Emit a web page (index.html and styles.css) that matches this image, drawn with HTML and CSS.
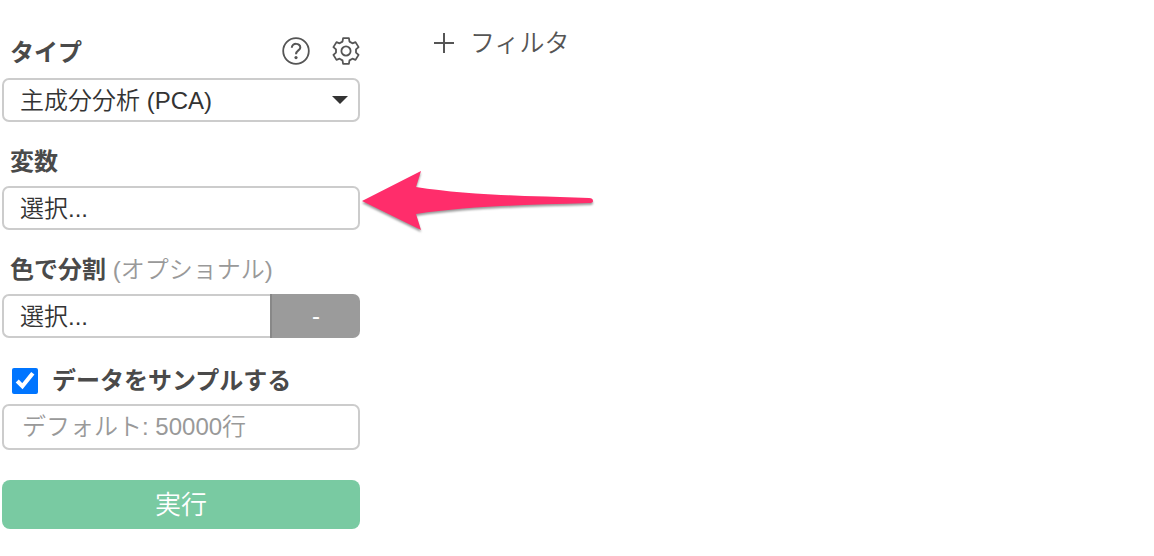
FILE: index.html
```html
<!DOCTYPE html>
<html lang="ja">
<head>
<meta charset="utf-8">
<meta name="viewport" content="width=device-width, initial-scale=1">
<title>主成分分析</title>
<link rel="stylesheet" href="styles.css">
</head>
<body>
<main class="layout">
  <form class="panel">
    <div class="field">
      <div class="field-head">
        <label class="label" for="type">タイプ</label>
        <div class="tools">
          <button type="button" class="icon-button" aria-label="ヘルプ">
            <svg width="28" height="28" viewBox="-14 -14 28 28" fill="none" stroke="#555" stroke-width="1.8">
              <circle r="12.8"/>
              <path d="M-4.2-3.2C-4.2-8.6 4.6-8.2 4.3-3.4C4.1-.6 0-.5 0 3.2" stroke-width="2"/>
              <circle cy="6.6" r="1.6" fill="#555" stroke="none"/>
            </svg>
          </button>
          <button type="button" class="icon-button" aria-label="設定">
            <svg width="28" height="28" viewBox="-14 -14 28 28" fill="none" stroke="#555" stroke-width="1.8" stroke-linejoin="round">
              <path d="M-2.9-12.8H2.9L3.5-9.4L6.4-7.7L9.5-8.9L12.6-3.9L10-1.6V1.6L12.6 3.9L9.5 8.9L6.4 7.7L3.5 9.4L2.9 12.8H-2.9L-3.5 9.4L-6.4 7.7L-9.5 8.9L-12.6 3.9L-10 1.6V-1.6L-12.6-3.9L-9.5-8.9L-6.4-7.7L-3.5-9.4Z"/>
              <circle r="4.6"/>
            </svg>
          </button>
        </div>
      </div>
      <div class="select-wrap">
        <select class="control" id="type"><option>主成分分析 (PCA)</option></select>
        <span class="caret"></span>
      </div>
    </div>

    <div class="field">
      <label class="label" for="variables">変数</label>
      <button type="button" class="control" id="variables">選択...</button>
    </div>

    <div class="field">
      <label class="label" for="color">色で分割 <span class="optional">(オプショナル)</span></label>
      <div class="group">
        <button type="button" class="control group-main" id="color">選択...</button>
        <button type="button" class="group-side">-</button>
      </div>
    </div>

    <div class="field sample">
      <label class="check"><input class="check-box" type="checkbox" checked>データをサンプルする</label>
      <input class="control sample-size" type="text" placeholder="デフォルト: 50000行" aria-label="サンプル行数">
    </div>

    <button type="button" class="run">実行</button>
  </form>

  <section class="content">
    <button type="button" class="filter">
      <svg width="20" height="20" viewBox="0 0 20 20" stroke="#555" stroke-width="2"><path d="M10 0V20M0 10H20"/></svg>
      フィルタ
    </button>
    <svg class="arrow" width="240" height="72" viewBox="0 0 240 72">
      <path d="M6 36L65 6L60 22C110 30 170 31 233 33Q237 33 237 36Q237 38 233 38C170 40 110 41 60 49L65 65Z" fill="#ff2d6b"/>
    </svg>
  </section>
</main>
</body>
</html>
```
FILE: styles.css
```css
* {
  box-sizing: border-box;
}

body {
  margin: 0;
  background: #fff;
  color: #333;
  font: 350 24px/36px "Liberation Sans", "Noto Sans CJK JP", sans-serif;
}

button,
select,
input {
  margin: 0;
  font: inherit;
  color: inherit;
}

button {
  padding: 0;
  border: 0;
  background: none;
}

.layout {
  display: flex;
  padding: 24px 2px;
}

.panel {
  display: flex;
  flex-direction: column;
  flex: none;
  gap: 12px;
  width: 358px;
}

.field {
  display: flex;
  flex-direction: column;
}

.field-head {
  display: flex;
  align-items: center;
  justify-content: space-between;
  height: 54px;
}

.label {
  height: 52px;
  padding: 10px 8px 6px;
  font-weight: 700;
  color: #4a4a4a;
}

.optional {
  font-weight: 350;
  color: #999;
}

.tools {
  display: flex;
  gap: 22px;
}

.icon-button,
.icon-button svg {
  display: block;
}

.select-wrap {
  position: relative;
}

.control {
  display: block;
  width: 100%;
  height: 44px;
  padding: 2px 16px 0;
  border: 2px solid #ccc;
  border-radius: 7px;
  background: #fff;
  text-align: left;
  appearance: none;
}

.caret {
  position: absolute;
  top: 18px;
  right: 12px;
  border: 8px solid transparent;
  border-top-color: #333;
  border-bottom: 0;
  pointer-events: none;
}

.group {
  display: flex;
}

.group-main {
  flex: 3 1 0;
  width: auto;
  border-right: 0;
  border-radius: 7px 0 0 7px;
}

.group-side {
  flex: none;
  width: 90px;
  border-left: 2px solid #888;
  border-radius: 0 7px 7px 0;
  background: #9b9b9b;
  color: #fff;
}

.sample {
  margin-top: 12px;
}

.check {
  display: flex;
  align-items: center;
  gap: 14px;
  height: 42px;
  padding: 0 10px 4px;
  font-weight: 700;
  color: #4a4a4a;
}

.check-box {
  width: 26px;
  height: 26px;
  accent-color: #0075ff;
}

.sample-size {
  height: 46px;
  padding: 0 18px;
}

.sample-size::placeholder {
  color: #999;
  opacity: 1;
}

.run {
  height: 49px;
  margin-top: 18px;
  border-radius: 8px;
  background: #79caa2;
  color: #fff;
  font-size: 26px;
}

.content {
  position: relative;
  flex: 1;
}

.filter {
  display: flex;
  align-items: center;
  gap: 16px;
  margin: 1px 0 0 74px;
  color: #555;
  font-size: 25px;
}

.arrow {
  position: absolute;
  top: 141px;
  left: -4px;
  filter: drop-shadow(0 2px 1px rgb(0 0 0 / 40%));
}
```
